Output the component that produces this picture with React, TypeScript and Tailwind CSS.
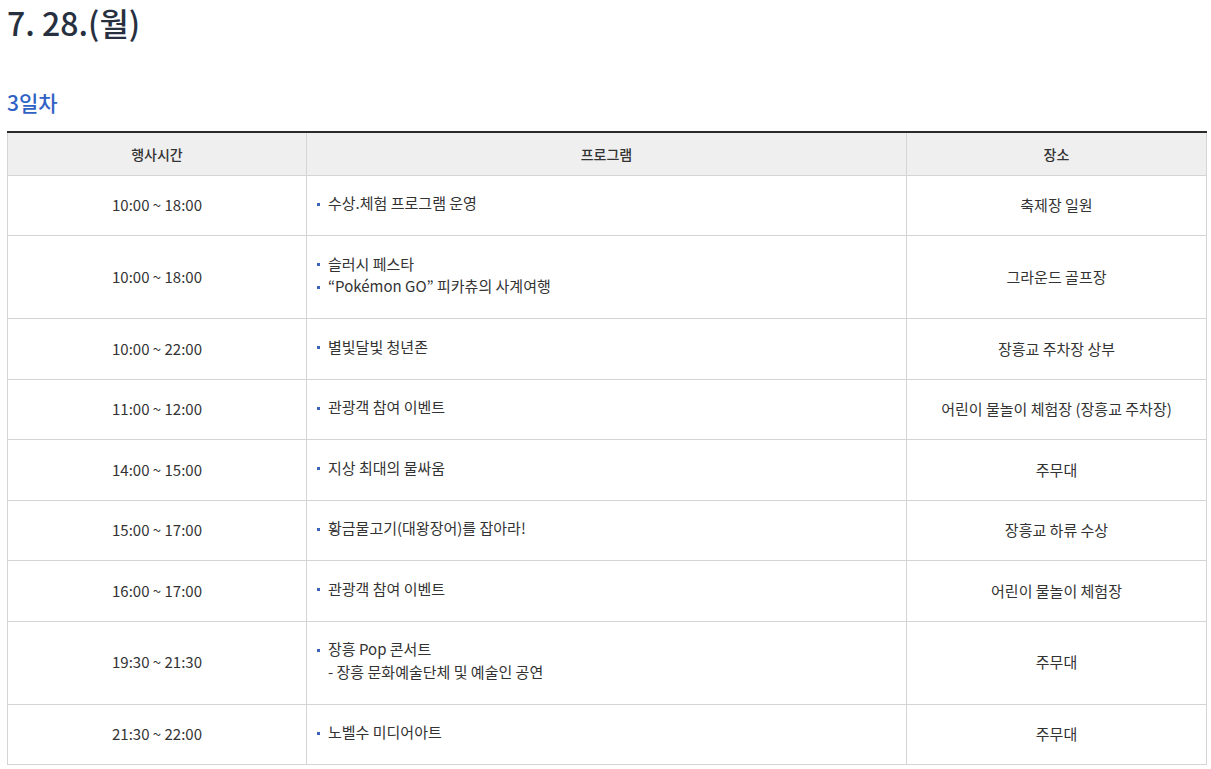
import React from 'react';

type Row = { time: string; items: string[]; sub?: string; place: string };

const rows: Row[] = [
  { time: '10:00 ~ 18:00', items: ['수상.체험 프로그램 운영'], place: '축제장 일원' },
  { time: '10:00 ~ 18:00', items: ['슬러시 페스타', '“Pokémon GO” 피카츄의 사계여행'], place: '그라운드 골프장' },
  { time: '10:00 ~ 22:00', items: ['별빛달빛 청년존'], place: '장흥교 주차장 상부' },
  { time: '11:00 ~ 12:00', items: ['관광객 참여 이벤트'], place: '어린이 물놀이 체험장 (장흥교 주차장)' },
  { time: '14:00 ~ 15:00', items: ['지상 최대의 물싸움'], place: '주무대' },
  { time: '15:00 ~ 17:00', items: ['황금물고기(대왕장어)를 잡아라!'], place: '장흥교 하류 수상' },
  { time: '16:00 ~ 17:00', items: ['관광객 참여 이벤트'], place: '어린이 물놀이 체험장' },
  { time: '19:30 ~ 21:30', items: ['장흥 Pop 콘서트'], sub: '- 장흥 문화예술단체 및 예술인 공연', place: '주무대' },
  { time: '21:30 ~ 22:00', items: ['노벨수 미디어아트'], place: '주무대' },
];

const App: React.FC = () => {
  return (
    <div className="bg-white min-h-screen pl-[7px] font-['Noto_Sans_CJK_KR','Noto_Sans',sans-serif] text-[#333]">
      <h1 className="text-[32px] leading-[44px] font-medium text-[#27303f]">7. 28.(월)</h1>

      <h2 className="mt-[44px] text-[21px] leading-[28px] font-medium text-[#2f62c4]">3일차</h2>

      <table className="mt-[15px] w-[1199px] border-collapse table-fixed text-[15px] leading-[22.5px]">
        <colgroup>
          <col className="w-[299px]" />
          <col className="w-[600px]" />
          <col className="w-[300px]" />
        </colgroup>
        <thead>
          <tr className="bg-[#efefef]">
            <th className="h-[43px] font-medium text-[14px] border border-[#d4d4d4] border-t-[#2a2a2a] border-t-[2px]">행사시간</th>
            <th className="h-[43px] font-medium text-[14px] border border-[#d4d4d4] border-t-[#2a2a2a] border-t-[2px]">프로그램</th>
            <th className="h-[43px] font-medium text-[14px] border border-[#d4d4d4] border-t-[#2a2a2a] border-t-[2px]">장소</th>
          </tr>
        </thead>
        <tbody>
          {rows.map((r, i) => (
            <tr key={i}>
              <td className="border border-[#d4d4d4] py-[18.5px] text-center">{r.time}</td>
              <td className="border border-[#d4d4d4] py-[18.5px] pl-[10px] align-middle">
                <div className="-translate-y-[2px]">
                  {r.items.map((it, j) => (
                    <div key={j} className="flex items-center">
                      <span className="w-[3px] h-[3px] bg-[#3b63b8] mr-[8px] shrink-0 translate-y-[1px]"></span>
                      <span>{it}</span>
                    </div>
                  ))}
                  {r.sub && <div className="pl-[11px]">{r.sub}</div>}
                </div>
              </td>
              <td className="border border-[#d4d4d4] py-[18.5px] text-center">{r.place}</td>
            </tr>
          ))}
        </tbody>
      </table>
    </div>
  );
};

export default App;
